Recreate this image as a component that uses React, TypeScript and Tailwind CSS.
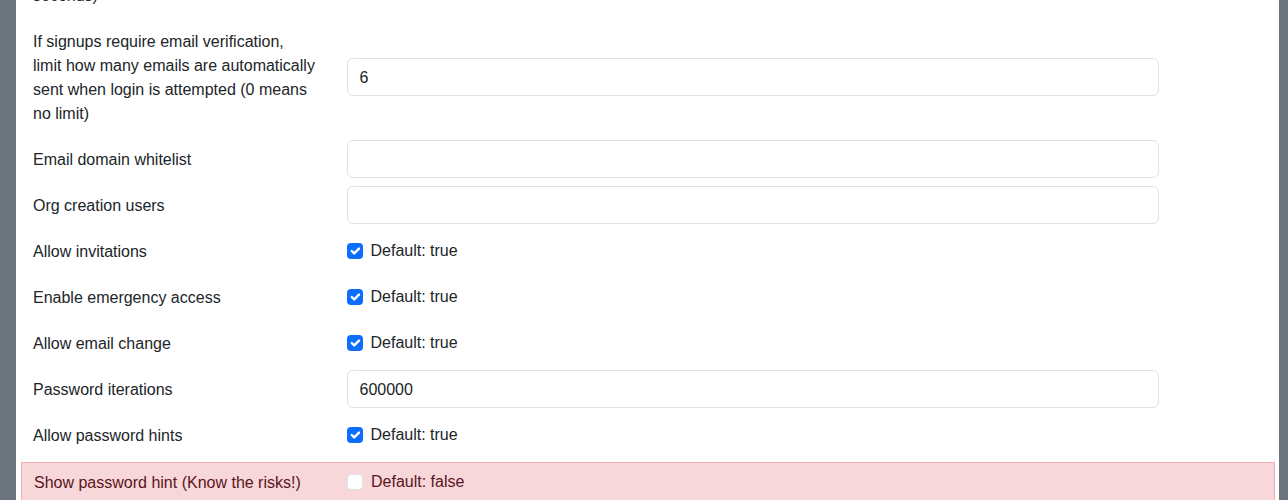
import React from "react";

type Row =
  | { kind: "text"; label: string[]; value: string }
  | { kind: "check"; label: string; checked: boolean; danger?: boolean };

const ROWS: Row[] = [
  {
    kind: "text",
    label: [
      "If signups require email verification,",
      "limit how many emails are automatically",
      "sent when login is attempted (0 means",
      "no limit)",
    ],
    value: "6",
  },
  { kind: "text", label: ["Email domain whitelist"], value: "" },
  { kind: "text", label: ["Org creation users"], value: "" },
  { kind: "check", label: "Allow invitations", checked: true },
  { kind: "check", label: "Enable emergency access", checked: true },
  { kind: "check", label: "Allow email change", checked: true },
  { kind: "text", label: ["Password iterations"], value: "600000" },
  { kind: "check", label: "Allow password hints", checked: true },
  {
    kind: "check",
    label: "Show password hint (Know the risks!)",
    checked: false,
    danger: true,
  },
];

function CheckBox({ checked }: { checked: boolean }) {
  if (checked) {
    return (
      <span className="grid h-4 w-4 shrink-0 place-items-center rounded-[4px] bg-[#0d6efd]">
        <svg viewBox="0 0 20 20" className="h-4 w-4" aria-hidden>
          <path
            d="m6 10 3 3 6-6"
            fill="none"
            stroke="#fff"
            strokeWidth="3"
            strokeLinecap="round"
            strokeLinejoin="round"
          />
        </svg>
      </span>
    );
  }
  return (
    <span className="h-4 w-4 shrink-0 rounded-[4px] border border-[#dee2e6] bg-white" />
  );
}

function SettingRow({ row }: { row: Row }) {
  const danger = row.kind === "check" && row.danger;
  // Long labels are wrapped line by line, the way the reference wraps them.
  const lines = row.kind === "text" ? row.label : [row.label];
  return (
    <div
      className={`flex items-center ${
        danger
          ? "border border-[#f1aeb5] bg-[#f8d7da] text-[#58151c]"
          : "text-[#212529]"
      }`}
    >
      <div className="w-3/12 shrink-0 px-3 pt-[8px] pb-[6px] leading-6">
        {lines.map((line, i) => (
          <span key={i} className="block whitespace-nowrap">
            {line}
          </span>
        ))}
      </div>
      <div className="w-8/12 shrink-0 px-3">
        {row.kind === "text" ? (
          <div className="h-[38px] rounded-[6px] border border-[#dee2e6] bg-white px-3 pt-[7px] pb-[5px] leading-6 text-[#212529]">
            {row.value}
          </div>
        ) : (
          <div className="flex items-center gap-2 leading-6">
            <CheckBox checked={row.checked} />
            <span>Default: {row.checked ? "true" : "false"}</span>
          </div>
        )}
      </div>
    </div>
  );
}

export default function App() {
  return (
    <div
      className="h-[500px] overflow-hidden bg-[#6c757d] pl-4 pr-[9px] text-base"
      style={{ fontFamily: '"Liberation Sans", Arial, sans-serif' }}
    >
      <div className="min-h-[600px] bg-white pl-[5px] pr-[4px]">
        <div className="mt-[-24px] flex flex-col gap-2">
          {/* Tail of the previous setting, scrolled mostly out of view. */}
          <div className="px-3 pt-[8px] pb-[6px] leading-6 text-[#212529]">
            seconds)
          </div>
          {ROWS.map((row, i) => (
            <SettingRow key={i} row={row} />
          ))}
        </div>
      </div>
    </div>
  );
}
